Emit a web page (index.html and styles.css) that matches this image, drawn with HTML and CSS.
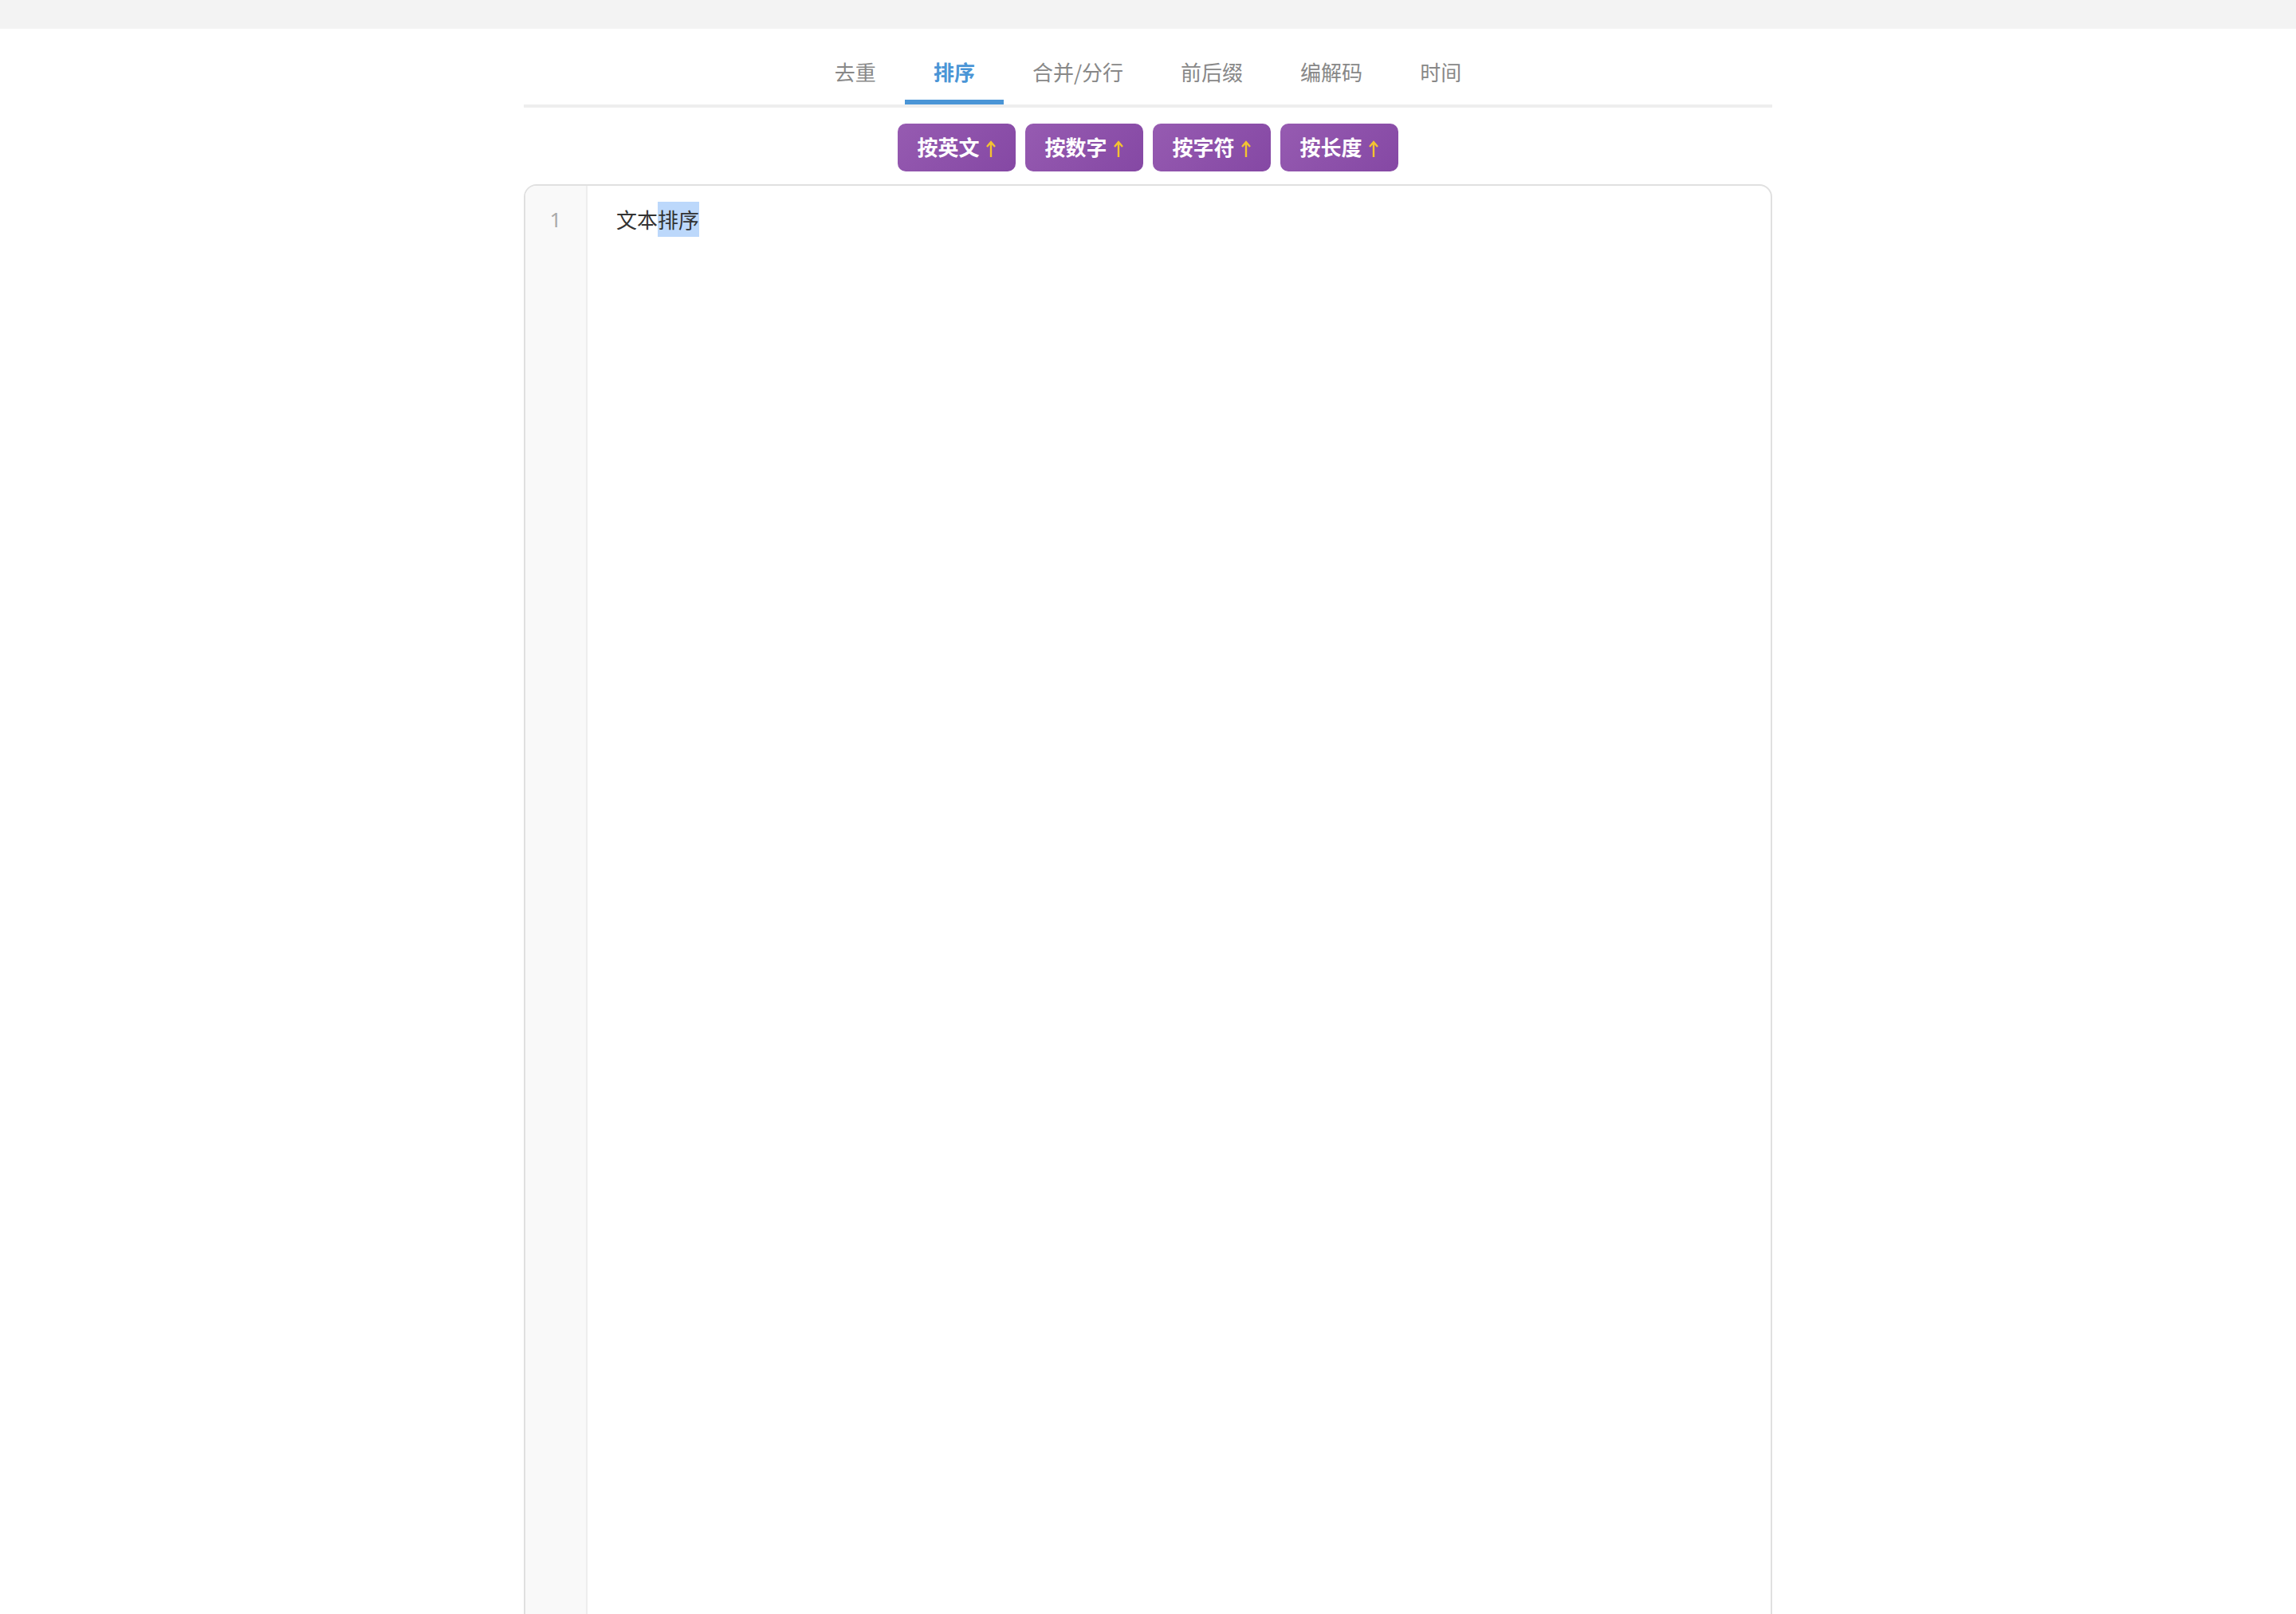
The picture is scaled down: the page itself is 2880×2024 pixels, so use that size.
FILE: index.html
```html
<!DOCTYPE html>
<html>
<head>
    <meta charset="utf-8">
    <title>文本工具</title>
    <link rel="stylesheet" href="styles.css">
</head>
<body>
    <div class="topbar"></div>

    <div class="wrap">
        <ul class="tabs">
            <li class="tab">去重</li>
            <li class="tab active">排序</li>
            <li class="tab">合并/分行</li>
            <li class="tab">前后缀</li>
            <li class="tab">编解码</li>
            <li class="tab">时间</li>
        </ul>

        <div class="actions">
            <button class="btn">按英文<svg class="arrow" viewBox="0 0 14 22"><path d="M7 21V2M2 8l5-6 5 6"/></svg></button>
            <button class="btn">按数字<svg class="arrow" viewBox="0 0 14 22"><path d="M7 21V2M2 8l5-6 5 6"/></svg></button>
            <button class="btn">按字符<svg class="arrow" viewBox="0 0 14 22"><path d="M7 21V2M2 8l5-6 5 6"/></svg></button>
            <button class="btn">按长度<svg class="arrow" viewBox="0 0 14 22"><path d="M7 21V2M2 8l5-6 5 6"/></svg></button>
        </div>

        <div class="editor">
            <div class="gutter">
                <div class="line-no">1</div>
            </div>
            <div class="lines">
                <div class="line">文本<span class="sel">排序</span></div>
            </div>
        </div>
    </div>
</body>
</html>
```

FILE: styles.css
```css
body { margin: 0; background: #fff; font-family: "Noto Sans CJK SC", "Noto Sans", sans-serif; }
.topbar { height: 36px; background: #f3f3f3; }
.wrap { width: 1566px; margin: 0 auto; }

/* tab strip */
.tabs { list-style: none; margin: 14px 0 0; padding: 0; display: flex; justify-content: center; border-bottom: 4px solid #eee; }
.tab { padding: 22px 36px 17px; line-height: 36px; font-size: 26px; color: #888; border-bottom: 6px solid transparent; cursor: pointer; }
.tab.active { color: #4a95d6; font-weight: bold; border-bottom-color: #4a95d6; }

/* sort buttons */
.actions { display: flex; justify-content: center; gap: 12px; margin-top: 20px; }
.btn { display: inline-flex; align-items: center; justify-content: center; width: 148px; height: 60px; padding: 0 0 2px; border: none; border-radius: 10px; background: linear-gradient(135deg, #965bb1, #8548a4); color: #fff; font-family: "Noto Sans CJK SC", sans-serif; font-size: 26px; font-weight: bold; line-height: 1; cursor: pointer; }
.btn .arrow { width: 14px; height: 22px; margin: 6px 0 0 7px; fill: none; stroke: #f4c430; stroke-width: 2.4; }

/* editor */
.editor { display: flex; margin-top: 16px; min-height: 1900px; border: 2px solid #e0e0e0; border-radius: 16px; overflow: hidden; }
.gutter { width: 76px; background: #f9f9f9; border-right: 2px solid #eee; padding-top: 20px; }
.line-no { height: 44px; line-height: 44px; text-align: center; font-family: "Noto Sans", sans-serif; font-size: 26px; color: #aaa; }
.lines { flex: 1; padding: 20px 36px 0; }
.line { height: 44px; line-height: 44px; font-size: 26px; color: #333; }
.sel { background: #bcd8fb; display: inline-block; }
```
